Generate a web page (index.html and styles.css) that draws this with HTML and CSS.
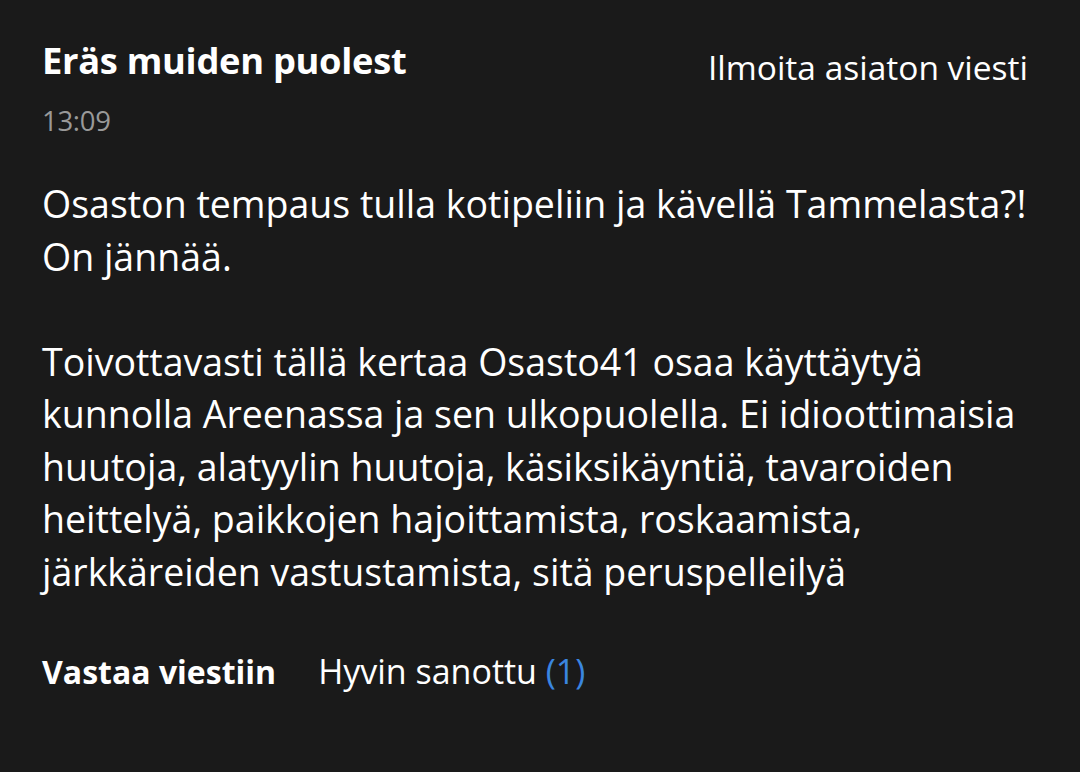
FILE: index.html
```html
<!DOCTYPE html>
<html lang="fi">
<head>
<meta charset="utf-8">
<link rel="stylesheet" href="styles.css">
</head>
<body>
<article class="comment">
  <header class="head">
    <div class="meta">
      <div class="author">Eräs muiden puolest</div>
      <div class="time">13:09</div>
    </div>
    <a class="report">Ilmoita asiaton viesti</a>
  </header>
  <div class="body">
    <p>Osaston tempaus tulla kotipeliin ja kävellä Tammelasta?!<br>On jännää.</p>
    <p>Toivottavasti tällä kertaa Osasto41 osaa käyttäytyä kunnolla Areenassa ja sen ulkopuolella. Ei idioottimaisia huutoja, alatyylin huutoja, käsiksikäyntiä, tavaroiden heittelyä, paikkojen hajoittamista, roskaamista, järkkäreiden vastustamista, sitä peruspelleilyä</p>
  </div>
  <footer class="actions">
    <a class="reply">Vastaa viestiin</a>
    <a class="like">Hyvin sanottu <span class="count">(1)</span></a>
  </footer>
</article>
</body>
</html>
```
FILE: styles.css
```css
html, body {
  margin: 0;
  padding: 0;
  background: #1a1a1a;
  height: 100%;
}
body {
  font-family: "Open Sans", Lato, sans-serif;
  color: #ffffff;
  font-variant-ligatures: none;
}
.comment {
  padding: 35px 42px 0 42px;
}
.head {
  display: flex;
  justify-content: space-between;
  align-items: flex-start;
}
.author {
  font-weight: 700;
  font-size: 36.3px;
  line-height: 50px;
  letter-spacing: -0.3px;
}
.time {
  color: #999999;
  font-size: 27.5px;
  line-height: 40px;
  margin-top: 16px;
  letter-spacing: -0.3px;
}
.report {
  font-size: 33.5px;
  line-height: 46px;
  margin-top: 9px;
  margin-right: 10px;
}
.body {
  margin-top: 37px;
  font-size: 37.5px;
  line-height: 52.5px;
}
.body p {
  margin: 0 0 52.5px;
}
.body p:last-child {
  margin-bottom: 49.5px;
}
.actions {
  display: flex;
  align-items: baseline;
  gap: 42px;
  line-height: 46px;
}
.reply {
  font-weight: 700;
  font-size: 32px;
}
.like {
  font-size: 34px;
}
.count {
  color: #3a86e0;
}
```
